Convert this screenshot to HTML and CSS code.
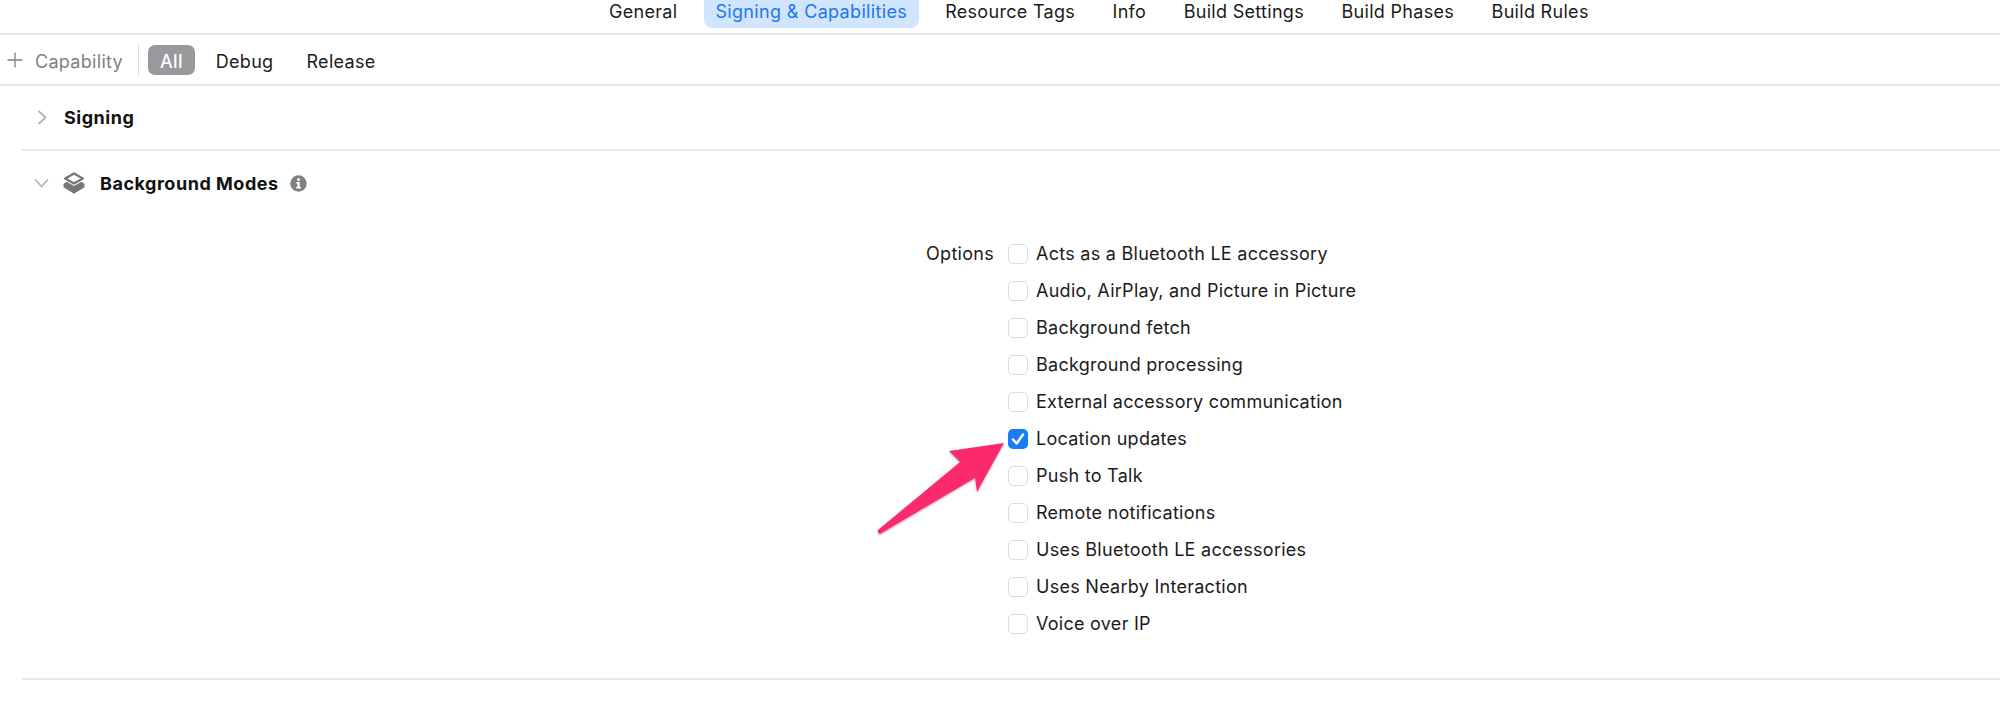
FILE: index.html
```html
<!DOCTYPE html>
<html lang="en">
<head>
<meta charset="utf-8">
<title>Signing &amp; Capabilities</title>
<link rel="stylesheet" href="styles.css">
</head>
<body>
<nav class="tabs">
  <span class="tab">General</span>
  <span class="tab tab-active">Signing &amp; Capabilities</span>
  <span class="tab">Resource Tags</span>
  <span class="tab">Info</span>
  <span class="tab">Build Settings</span>
  <span class="tab">Build Phases</span>
  <span class="tab">Build Rules</span>
</nav>
<div class="toolbar">
  <svg class="plus" width="16" height="16" viewBox="0 0 16 16"><path d="M8 .5v15M.5 8h15" stroke="#808080" stroke-width="1.3" fill="none"/></svg>
  <span class="capability">Capability</span>
  <span class="divider"></span>
  <span class="filter filter-active">All</span>
  <span class="filter">Debug</span>
  <span class="filter">Release</span>
</div>
<section class="section section-signing">
  <svg class="chev-right" width="10" height="15" viewBox="0 0 10 15"><path d="M1.500 1l7 6.500-7 6.500" stroke="#b4b4b4" stroke-width="1.800" fill="none"/></svg>
  <h2 class="title">Signing</h2>
</section>
<section class="section-modes">
  <header class="modes-head">
    <svg class="chev-down" width="15" height="10" viewBox="0 0 15 10"><path d="M1 1.500l6.500 7 6.500-7" stroke="#b4b4b4" stroke-width="1.800" fill="none"/></svg>
    <svg class="layers" width="22" height="22" viewBox="0 0 22 22">
      <path d="M11 1.500l8.800 5L11 11.500 2.200 6.500z" fill="#fff" stroke="#777" stroke-width="2.400" stroke-linejoin="round"/>
      <path d="M3.800 9.800L11 14l7.200-4.200 3.300 2v3.400L11 21.800.5 15.200v-3.400z" fill="#777"/>
    </svg>
    <h2 class="title">Background Modes</h2>
    <svg class="info" width="17" height="17" viewBox="0 0 17 17">
      <circle cx="8.500" cy="8.500" r="8.200" fill="#808080"/>
      <circle cx="8.500" cy="4.600" r="1.500" fill="#fff"/>
      <path d="M6.300 7h3.400v5h1.200v1.500H6.200V12h1.300V8.500H6.300z" fill="#fff"/>
    </svg>
  </header>
  <div class="options">
    <div class="options-label">Options</div>
    <ul class="option-list">
      <li class="option"><span class="box"></span>Acts as a Bluetooth LE accessory</li>
      <li class="option"><span class="box"></span>Audio, AirPlay, and Picture in Picture</li>
      <li class="option"><span class="box"></span>Background fetch</li>
      <li class="option"><span class="box"></span>Background processing</li>
      <li class="option"><span class="box"></span>External accessory communication</li>
      <li class="option"><span class="box box-on"><svg width="20" height="20" viewBox="0 0 20 20"><path d="M5 10.500l3.600 4L15 5.500" stroke="#fff" stroke-width="2.400" fill="none" stroke-linecap="round" stroke-linejoin="round"/></svg></span>Location updates</li>
      <li class="option"><span class="box"></span>Push to Talk</li>
      <li class="option"><span class="box"></span>Remote notifications</li>
      <li class="option"><span class="box"></span>Uses Bluetooth LE accessories</li>
      <li class="option"><span class="box"></span>Uses Nearby Interaction</li>
      <li class="option"><span class="box"></span>Voice over IP</li>
    </ul>
  </div>
</section>
<svg class="arrow" width="2000" height="719" viewBox="0 0 2000 719">
  <defs><filter id="s" x="-20%" y="-20%" width="140%" height="140%"><feDropShadow dx="0" dy="1" stdDeviation="1.200" flood-color="#000" flood-opacity=".3"/></filter></defs>
  <path d="M1004 443L949 451 960 462 878 530Q877 533 880 534L975 478 977 492z" fill="#fb2c6d" filter="url(#s)"/>
</svg>
</body>
</html>
```
FILE: styles.css
```css
* { box-sizing: border-box; }
html, body { margin: 0; padding: 0; }
body {
  width: 2000px;
  height: 719px;
  overflow: hidden;
  position: relative;
  background: #fff;
  color: #1b1b1b;
  font-family: Inter, "Liberation Sans", sans-serif;
  font-size: 18px;
  letter-spacing: 0.3px;
}
.tabs {
  height: 35px;
  display: flex;
  align-items: flex-start;
  padding-left: 598px;
  gap: 15.500px;
  border-bottom: 2px solid #e6e6e6;
}
.tab {
  height: 28px;
  line-height: 23px;
  padding: 0 11px;
  border-radius: 0 0 8px 8px;
}
.tab-active { background: #d1e5fd; color: #1b78f2; padding: 0 11.500px; letter-spacing: 0.34px; }
.toolbar {
  height: 51px;
  display: flex;
  align-items: center;
  padding-left: 7px;
  border-bottom: 2px solid #e6e6e6;
}
.plus { flex: none; }
.capability { margin-left: 12px; padding-top: 3px; color: #7f7f7f; }
.divider { width: 1px; height: 32px; background: #dedede; margin-left: 15px; margin-right: 9px; }
.filter { height: 30px; line-height: 34px; padding: 0 12px; margin-right: 9px; border-radius: 7px; }
.filter-active { background: #98989d; color: #fff; font-weight: 500; }
.section-signing {
  height: 65px;
  margin-left: 22px;
  display: flex;
  align-items: center;
  padding-left: 15px;
  border-bottom: 2px solid #e8e8e8;
}
.chev-right { margin-right: 17px; }
.title { margin: 0; font-size: 18px; font-weight: 700; color: #111; letter-spacing: 0.52px; }
.section-modes {
  height: 529px;
  margin-left: 22px;
  border-bottom: 2px solid #e8e8e8;
  padding-top: 21px;
}
.modes-head { display: flex; align-items: center; height: 22px; padding-left: 12px; }
.layers { margin-left: 14px; margin-right: 15px; }
.info { margin-left: 11px; }
.options { display: flex; margin-top: 41px; padding-left: 904px; }
.options-label { width: 82px; line-height: 37px; }
.option-list { list-style: none; margin: 0; padding: 0; letter-spacing: 0.27px; }
.option { height: 37px; display: flex; align-items: center; }
.box {
  width: 20px;
  height: 20px;
  margin-right: 8px;
  background: #fff;
  border: 1.500px solid #dcdcdc;
  border-radius: 5px;
  flex: none;
}
.box-on { border: 0; background: #1a7cf5; }
.box-on svg { display: block; }
.arrow { position: absolute; left: 0; top: 0; pointer-events: none; }
```
